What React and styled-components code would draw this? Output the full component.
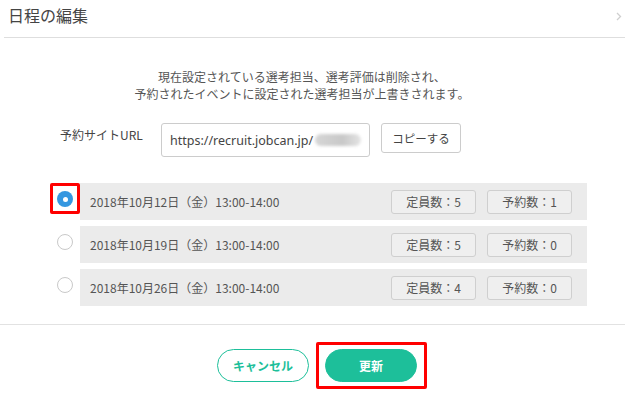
import React from "react";
import styled, { createGlobalStyle } from "styled-components";

const GlobalStyle = createGlobalStyle`
  body {
    margin: 0;
    background: #fff;
    font-family: "Noto Sans CJK JP", "Noto Sans", sans-serif;
    color: #555;
  }
`;

const schedules = [
  { date: "2018年10月12日（金）13:00-14:00", capacity: 5, reserved: 1, selected: true },
  { date: "2018年10月19日（金）13:00-14:00", capacity: 5, reserved: 0 },
  { date: "2018年10月26日（金）13:00-14:00", capacity: 4, reserved: 0 }
];

export default function App() {
  return (
    <>
      <GlobalStyle />
      <Modal>
        <Header>
          <Title>日程の編集</Title>
          <Close width="6" height="9" viewBox="0 0 6 9">
            <path d="M1 1l3.5 3.5L1 8" fill="none" stroke="#cfcfcf" strokeWidth="1.3" />
          </Close>
        </Header>
        <Body>
          <Notice>
            現在設定されている選考担当、選考評価は削除され、
            <br />
            予約されたイベントに設定された選考担当が上書きされます。
          </Notice>
          <UrlRow>
            <UrlLabel>予約サイトURL</UrlLabel>
            <UrlInput>
              https://recruit.jobcan.jp/<Blurred />
            </UrlInput>
            <CopyButton>コピーする</CopyButton>
          </UrlRow>
          <List>
            {schedules.map((s) => (
              <Item key={s.date}>
                <RadioCell>
                  <Radio selected={s.selected} />
                  {s.selected && <Highlight />}
                </RadioCell>
                <Row>
                  <DateText>{s.date}</DateText>
                  <Badges>
                    <Badge>定員数：{s.capacity}</Badge>
                    <Badge>予約数：{s.reserved}</Badge>
                  </Badges>
                </Row>
              </Item>
            ))}
          </List>
        </Body>
        <Footer>
          <Button>キャンセル</Button>
          <Marked>
            <Button primary>更新</Button>
            <Highlight wide />
          </Marked>
        </Footer>
      </Modal>
    </>
  );
}

const Modal = styled.div`
  width: 625px;
  height: 395px;
  overflow: hidden;
`;

const Header = styled.div`
  height: 38px;
  margin-left: 4px;
  padding: 0 3px 0 4px;
  border-bottom: 1px solid #dedede;
  display: flex;
  align-items: flex-start;
  justify-content: space-between;
  box-sizing: border-box;
`;

const Title = styled.h1`
  margin: 5px 0 0;
  font-size: 16px;
  line-height: 20px;
  font-weight: 400;
  color: #444;
`;

const Close = styled.svg`
  margin-top: 12px;
`;

const Body = styled.div`
  padding-top: 30px;
`;

const Notice = styled.p`
  margin: 0 21px 0 0;
  font-size: 12px;
  line-height: 17px;
  text-align: center;
  color: #555;
`;

const UrlRow = styled.div`
  display: flex;
  align-items: flex-start;
  margin-top: 21px;
  padding-left: 60px;
`;

const UrlLabel = styled.span`
  width: 101px;
  font-size: 12px;
  line-height: 24px;
  color: #444;
`;

const UrlInput = styled.div`
  width: 209px;
  height: 34px;
  box-sizing: border-box;
  border: 1px solid #ccc;
  border-radius: 3px;
  padding: 0 8px;
  display: flex;
  align-items: center;
  font-family: "Noto Sans", sans-serif;
  font-size: 12.5px;
  color: #444;
  overflow: hidden;
  white-space: nowrap;
`;

const Blurred = styled.span`
  display: inline-block;
  width: 60px;
  height: 12px;
  margin-left: 2px;
  border-radius: 6px;
  background: linear-gradient(90deg, #d6d6d6, #c8c8c8 60%, #e4e4e4);
  filter: blur(1.5px);
`;

const CopyButton = styled.button`
  margin-left: 11px;
  width: 80px;
  height: 30px;
  border: 1px solid #ccc;
  border-radius: 3px;
  background: #fff;
  font-family: inherit;
  font-size: 11.5px;
  color: #444;
  padding: 0;
`;

const List = styled.div`
  margin-top: 26px;
  display: flex;
  flex-direction: column;
  gap: 6px;
`;

const Item = styled.div`
  display: flex;
  padding-left: 50px;
`;

const RadioCell = styled.div`
  position: relative;
  width: 30px;
  display: flex;
  justify-content: center;
  padding-top: 8px;
`;

const Radio = styled.span`
  width: 16px;
  height: 16px;
  border-radius: 50%;
  box-sizing: border-box;
  background: ${(p) => (p.selected ? "#3597e0" : "#fff")};
  border: ${(p) => (p.selected ? "none" : "1px solid #c9c9c9")};
  display: flex;
  align-items: center;
  justify-content: center;
  &::after {
    content: "";
    display: ${(p) => (p.selected ? "block" : "none")};
    width: 5px;
    height: 5px;
    border-radius: 50%;
    background: #fff;
  }
`;

const Highlight = styled.span`
  position: absolute;
  box-sizing: border-box;
  border: 3px solid #f00;
  border-radius: 2px;
  left: ${(p) => (p.wide ? "-9px" : "0")};
  top: ${(p) => (p.wide ? "-7px" : "0")};
  width: ${(p) => (p.wide ? "111px" : "30px")};
  height: ${(p) => (p.wide ? "47px" : "31px")};
`;

const Row = styled.div`
  width: 507px;
  height: 37px;
  background: #ebebeb;
  display: flex;
  align-items: center;
  justify-content: space-between;
  padding: 0 15px 0 10px;
  box-sizing: border-box;
`;

const DateText = styled.span`
  font-size: 12px;
  color: #555;
`;

const Badges = styled.div`
  display: flex;
  gap: 11px;
`;

const Badge = styled.span`
  width: 85px;
  height: 24px;
  box-sizing: border-box;
  border: 1px solid #cfcfcf;
  border-radius: 3px;
  background: #efefef;
  display: flex;
  align-items: center;
  justify-content: center;
  font-size: 12px;
  color: #555;
`;

const Footer = styled.div`
  margin-top: 18px;
  border-top: 1px solid #e2e2e2;
  padding: 24px 0 0 9px;
  display: flex;
  justify-content: center;
  gap: 16px;
`;

const Marked = styled.div`
  position: relative;
`;

const Button = styled.button`
  width: 92px;
  height: 33px;
  border-radius: 17px;
  box-sizing: border-box;
  border: 1px solid #1dbf9a;
  background: ${(p) => (p.primary ? "#1dbf9a" : "#fff")};
  color: ${(p) => (p.primary ? "#fff" : "#1dbf9a")};
  font-family: inherit;
  font-size: 12px;
  font-weight: 700;
  padding: 0;
`;
